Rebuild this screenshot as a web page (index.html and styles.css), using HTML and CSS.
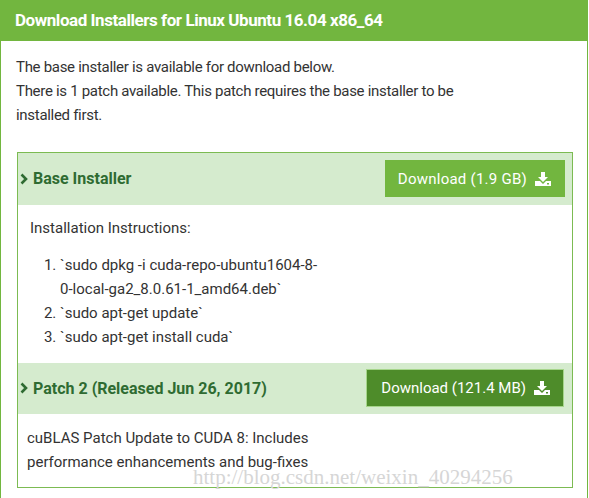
FILE: index.html
```html
<!DOCTYPE html>
<html>
<head>
<meta charset="utf-8">
<link rel="stylesheet" href="styles.css">
</head>
<body>
<div class="panel">
  <div class="panel-head">Download Installers for Linux Ubuntu 16.04 x86_64</div>
  <div class="panel-body">
    <p class="intro">The base installer is available for download below.<br>There is 1 patch available. This patch requires the base installer to be installed first.</p>
    <div class="box">
      <div class="row-head">
        <div class="row-title"><svg class="chev" viewBox="0 0 8 12" width="8" height="12"><path d="M1.5 1.5l4.5 4.5-4.5 4.5" fill="none" stroke="#2f6b32" stroke-width="2.6"/></svg>Base Installer</div>
        <a class="btn">Download (1.9 GB) <svg class="dl" viewBox="0 0 16 14" width="16" height="14"><path d="M6 0h4v5h3l-5 5-5-5h3z" fill="#fff"/><path d="M0 9h5l3 3 3-3h5v5H0z" fill="#fff"/><rect x="12" y="11" width="2" height="1.5" fill="#72b63f"/></svg></a>
      </div>
      <div class="row-body">
        <div>Installation Instructions:</div>
        <ol class="steps">
          <li>`sudo dpkg -i cuda-repo-ubuntu1604-8-<wbr>0-local-ga2_8.0.61-1_amd64.deb`</li>
          <li>`sudo apt-get update`</li>
          <li>`sudo apt-get install cuda`</li>
        </ol>
      </div>
      <div class="row-head patch">
        <div class="row-title"><svg class="chev" viewBox="0 0 8 12" width="8" height="12"><path d="M1.5 1.5l4.5 4.5-4.5 4.5" fill="none" stroke="#2f6b32" stroke-width="2.6"/></svg>Patch 2 (Released Jun 26, 2017)</div>
        <a class="btn btn-dark">Download (121.4 MB) <svg class="dl" viewBox="0 0 16 14" width="16" height="14"><path d="M6 0h4v5h3l-5 5-5-5h3z" fill="#fff"/><path d="M0 9h5l3 3 3-3h5v5H0z" fill="#fff"/><rect x="12" y="11" width="2" height="1.5" fill="#4e8c2a"/></svg></a>
      </div>
      <div class="row-body last">cuBLAS Patch Update to CUDA 8: Includes<br>performance enhancements and bug-fixes</div>
    </div>
  </div>
</div>
<div class="watermark">http://blog.csdn.net/weixin_40294256</div>
</body>
</html>
```
FILE: styles.css
```css
html, body {
  margin: 0;
  padding: 0;
  background: #fff;
}
body {
  font-family: Roboto, "Liberation Sans", sans-serif;
  font-size: 15px;
  color: #333;
  position: relative;
  width: 589px;
  height: 498px;
  overflow: hidden;
}
.panel {
  width: 588px;
  box-sizing: border-box;
  border-left: 1px solid #72b63f;
  border-right: 1px solid #72b63f;
  height: 498px;
}
.panel-head {
  height: 41px;
  background: #72b63f;
  color: #fff;
  font-weight: bold;
  font-size: 17px;
  letter-spacing: -0.45px;
  line-height: 41px;
  padding-left: 15px;
  margin-left: -1px;
  margin-right: -1px;
}
.panel-body {
  padding: 14px 14px 0 15px;
}
.intro {
  margin: 0;
  line-height: 24px;
  width: 445px;
  letter-spacing: -0.3px;
}
.box {
  margin: 25px 0 0 1px;
  width: 556px;
  box-sizing: border-box;
  border: 1px solid #7cbb52;
}
.row-head {
  background: #d5ebce;
  display: flex;
  align-items: center;
  justify-content: space-between;
  padding: 7px 7px 8px 2px;
}
.row-head.patch {
  padding: 6px 8px 7px 2px;
}
.row-title {
  color: #2f6b32;
  font-weight: bold;
  font-size: 16px;
  display: flex;
  align-items: center;
}
.chev {
  margin: 0 5px 0 0;
  display: block;
}
.btn {
  display: flex;
  align-items: center;
  gap: 8px;
  height: 37px;
  box-sizing: border-box;
  background: #72b63f;
  color: #fff;
  font-size: 15px;
  letter-spacing: 0.25px;
  padding: 0 14px 0 13px;
}
.btn-dark {
  background: #4e8c2a;
  border: 1px solid #a6d58a;
  height: 38px;
  letter-spacing: 0;
  padding: 0 13px 0 14px;
}
.row-body {
  padding: 11px 12px 14px 12px;
  line-height: 24px;
}
.row-body.last {
  padding: 12px 10px 13px 9px;
}
.steps {
  margin: 13px 0 0 0;
  padding-left: 30px;
  width: 263px;
}
.watermark {
  position: absolute;
  left: 193px;
  top: 465px;
  font-family: "Liberation Serif", serif;
  font-size: 21px;
  color: #d6d6d6;
  white-space: nowrap;
}
```
